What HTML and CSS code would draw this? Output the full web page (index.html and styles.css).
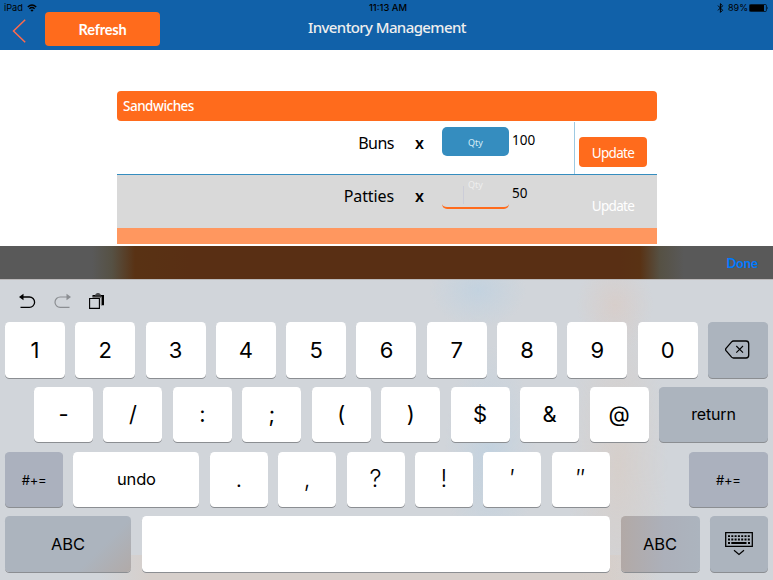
FILE: index.html
```html
<!DOCTYPE html>
<html lang="en">
<head>
<meta charset="utf-8">
<title>Inventory Management</title>
<link rel="stylesheet" href="styles.css">
</head>
<body>
<header class="header">
  <div class="status">
    <div class="status-left"><span class="device">iPad</span>
      <svg width="10" height="8" viewBox="0 0 10 8" fill="none" stroke="#000" stroke-width="1.4"><path d="M.8 3Q5-.9 9.2 3M2.4 4.8Q5 2.4 7.6 4.8"/><path d="M5 7.8L3.5 6.2Q5 5 6.5 6.2Z" fill="#000" stroke="none"/></svg>
    </div>
    <div class="clock">11:13 AM</div>
    <div class="status-right">
      <svg width="7" height="10" viewBox="0 0 7 10" fill="none" stroke="#000" stroke-width="1"><path d="M1 2.6L5.6 7.2 3.4 9.4V.7L5.6 2.8 1 7.4"/></svg>
      <span class="percent">89%</span>
      <svg width="20" height="8" viewBox="0 0 20 8"><rect x=".4" y=".5" width="17" height="7" rx="1" fill="none" stroke="#000" stroke-width=".7"/><path d="M.8 1H15V7H.8Z"/><path d="M18.3 2.5Q19.6 4 18.3 5.5Z"/></svg>
    </div>
  </div>
  <nav class="nav">
    <svg class="back" width="14" height="24" viewBox="0 0 14 24" fill="none" stroke="#ff6a4c" stroke-width="1.5"><path d="M13.2.7L1.5 12 13.2 23.3"/></svg>
    <button class="btn refresh">Refresh</button>
    <h1 class="title">Inventory Management</h1>
  </nav>
</header>
<main class="list">
  <div class="section">Sandwiches</div>
  <div class="item">
    <span class="name">Buns</span><span class="times">x</span>
    <span class="qty">Qty</span><span class="count">100</span>
    <div class="action"><button class="btn update">Update</button></div>
  </div>
  <div class="item selected">
    <span class="name">Patties</span><span class="times">x</span>
    <span class="qty editing">Qty</span><span class="count">50</span>
    <div class="action"><button class="btn update">Update</button></div>
  </div>
  <div class="next-section"></div>
</main>
<div class="accessory"><span class="done">Done</span></div>
<section class="keyboard">
  <div class="tools">
    <svg width="17" height="16" viewBox="0 0 17 16" fill="none" stroke="#000" stroke-width="1.3"><path d="M3 4H10.4A5 5 0 0 1 10.4 14.4H1.5"/><path d="M0 4L4.5 .8V7.2Z" fill="#000" stroke="none"/></svg>
    <svg width="17" height="16" viewBox="0 0 17 16" fill="none" stroke="#8b8e92" stroke-width="1.2"><path d="M14 4H6.2A5 5 0 0 0 6.2 14.4H15.5"/><path d="M17 4L12.5 .8V7.2Z" fill="#8b8e92" stroke="none"/></svg>
    <svg width="16" height="16" viewBox="0 0 16 16"><path d="M3.5 2H6Q6.5.3 9 .3T12 2H15V12.3H12V4.5H3.5Z"/><path d="M6 1.9H12" stroke="#d1d5da" stroke-width=".6"/><path d="M4 4.2H12.4V12" fill="none" stroke="#777" stroke-width="1.2"/><path d="M.6 5.5H10.4V15.4H.6Z" fill="#d1d5da" stroke="#000" stroke-width="1.1"/></svg>
  </div>
  <div class="row row-digits">
    <span class="key">1</span><span class="key">2</span><span class="key">3</span><span class="key">4</span><span class="key">5</span><span class="key">6</span><span class="key">7</span><span class="key">8</span><span class="key">9</span><span class="key">0</span>
    <span class="key dark"><svg width="25" height="19" viewBox="0 0 25 19" fill="none" stroke="#000" stroke-width="1.3"><path d="M8.5 1H21Q23.7 1 23.7 3.7V15.3Q23.7 18 21 18H8.5Q7.5 18 6.6 17.1L1 10.6Q.2 9.5 1 8.4L6.6 1.9Q7.5 1 8.5 1Z"/><path d="M11.3 6L18 12.7M18 6L11.3 12.7" stroke-width="1.1"/></svg></span>
  </div>
  <div class="row row-symbols">
    <span class="key">-</span><span class="key">/</span><span class="key">:</span><span class="key">;</span><span class="key">(</span><span class="key">)</span><span class="key">$</span><span class="key">&amp;</span><span class="key">@</span>
    <span class="key dark word return">return</span>
  </div>
  <div class="row row-marks">
    <span class="key dark small cool">#+=</span><span class="key word undo">undo</span>
    <span class="key">.</span><span class="key">,</span><span class="key">?</span><span class="key">!</span><span class="key">′</span><span class="key">″</span>
    <span class="key dark small cool more">#+=</span>
  </div>
  <div class="row row-bottom">
    <span class="key dark word abc">ABC</span><span class="key space"></span><span class="key dark word abc-right">ABC</span>
    <span class="key dark hide"><svg width="28" height="24" viewBox="0 0 28 24" fill="none" stroke="#000"><path d="M.7.7H27.3V14.3H.7Z" stroke-width="1.3"/><path d="M3 4.2H25M3 7.5H25" stroke-width="1.8" stroke-dasharray="2 1.3"/><path d="M3 11H5M6.3 11H21.5M23 11H25" stroke-width="1.8"/><path d="M9 18.2L14 22.4 19 18.2" stroke-width="1.2"/></svg></span>
  </div>
</section>
</body>
</html>
```
FILE: styles.css
```css
* { box-sizing: border-box; }
body {
  margin: 0;
  width: 773px;
  height: 580px;
  overflow: hidden;
  background: #fff;
  color: #000;
  font-family: "Noto Sans", sans-serif;
  display: flex;
  flex-direction: column;
}
svg { display: block; flex: none; }

.header { height: 50px; background: #1161a9; flex: none; }
.status {
  height: 12px;
  display: grid;
  grid-template-columns: 1fr auto 1fr;
  padding: 0 4px 0 4px;
  font: 9.5px/16px Inter, sans-serif;
}
.status-left, .status-right { display: flex; align-items: center; height: 16px; }
.status-left { gap: 4px; }
.device { font-size: 9.2px; }
.clock { font-weight: 500; font-size: 9.4px; padding-left: 3px; }
.status-right { justify-content: flex-end; gap: 1px; }
.percent { margin-left: 3px; font-size: 9px; }
.nav { height: 38px; display: grid; grid-template-columns: 33px 115px 1fr; align-items: start; padding-left: 12px; }
.back { margin-top: 7px; }
.btn {
  border: 0;
  padding: 0;
  border-radius: 4px;
  background: #ff6b1c;
  color: #fff;
  font-family: "Noto Sans", sans-serif;
}
.refresh { height: 34px; font: 700 14.5px/36px Lato, sans-serif; letter-spacing: -.2px; }
.title { margin: 0 0 0 148px; color: #eee; font-size: 15px; letter-spacing: -.6px; line-height: 30px; font-weight: 550; white-space: nowrap; }

.list { width: 540px; height: 155px; margin: 41px 0 0 117px; flex: none; }
.section {
  height: 29.5px;
  border-radius: 4px;
  background: #ff6b1c;
  color: #fff;
  padding-left: 6px;
  font-size: 13.5px;
  letter-spacing: -.5px;
  line-height: 31px;
  font-weight: 550;
}
.item {
  height: 54.5px;
  padding-top: 1.5px;
  border-bottom: 1px solid #358dbf;
  display: grid;
  grid-template-columns: 277px 48px 67px 65px 83px;
  font-size: 16px;
}
.item.selected { height: 53px; padding-top: 0; border: 0; background: #d9d9d9; }
.name { text-align: right; line-height: 42px; letter-spacing: -.1px; }
.item:not(.selected) .name { letter-spacing: -.5px; }
.times { text-align: center; line-height: 42px; font-weight: 600; padding-left: 3px; }
.qty {
  height: 29px;
  margin-top: 5px;
  border-radius: 5px;
  background: #358dbf;
  color: #d5edf8;
  font-size: 9px;
  line-height: 31px;
  text-align: center;
}
.editing {
  height: 30px;
  margin-top: 4px;
  background: linear-gradient(#cccdd8, #cccdd8) 21px 7px / 1px 18px no-repeat;
  border-bottom: 2px solid #ff6b1c;
  color: #eee;
  line-height: 11px;
}
.count { padding-left: 3px; font-size: 13.5px; line-height: 36px; }
.action { padding: 15px 0 0 5px; }
.item:not(.selected) .action { border-left: 1px solid #9dc9e2; padding-left: 4px; }
.update { width: 68px; height: 30px; font-size: 13.5px; letter-spacing: -.7px; line-height: 32px; display: block; }
.selected .update { background: none; }
.next-section { height: 16px; background: #ff975f; }

.accessory {
  height: 33px;
  flex: none;
  text-align: right;
  padding-right: 15px;
  background: linear-gradient(90deg, #595959 0, #595959 92px, #565144 112px, #593214 135px, #592f14 190px, #592f14 620px, #593214 640px, #565144 660px, #595959 684px);
}
.done { color: #007aff; font: 700 13px/34px Lato, sans-serif; }

.keyboard {
  flex: 1;
  border-top: 1px solid #bbb9ba;
  background:
    radial-gradient(ellipse 48px 38px at 478px 10px, #c3d2df, transparent),
    radial-gradient(ellipse 45px 110px at 490px 175px, #c3d2df, transparent),
    radial-gradient(ellipse 38px 48px at 615px 25px, #d7cecb, transparent),
    radial-gradient(ellipse 50px 170px at 618px 185px, #d6cfcb, transparent),
    linear-gradient(90deg, transparent 100px, #d6cfcb 150px, #d6cfcb 610px, transparent 665px) 0 275px / 100% 26px no-repeat,
    #d1d5da;
}
.tools { height: 42px; padding: 13px 0 0 19px; display: flex; gap: 17.8px; }
.row { display: flex; gap: 10.3px; height: 55.5px; padding: 0 5px; margin-bottom: 9.3px; }
.key {
  flex: none;
  width: 58px;
  height: 55.5px;
  border-radius: 4.5px;
  background: #fff;
  box-shadow: 0 1px 0 #8b8e92;
  font: 24px/56px Inter, sans-serif;
  display: flex;
  align-items: center;
  justify-content: center;
}
.dark { background: #acb4be; }
.cool { background: #abb1be; }
.word { font-size: 16.5px; letter-spacing: -.15px; line-height: 54px; }
.small { font-size: 13px; letter-spacing: -.3px; padding-top: 1px; }
.row-digits .key { flex: 1; font-size: 22px; }
.row-symbols { padding-left: 34px; gap: 10.45px; }
.row-symbols .key { width: 59px; font-size: 22px; padding-bottom: 2px; }
.row-symbols .return { width: auto; flex: 1; font-size: 16px; }
.row-marks { gap: 10.4px; }
.row-marks .undo { width: 126px; }
.row-marks .more { width: 79.5px; margin-left: auto; }
.row-marks .key:not(.word):not(.small) { font-weight: 350; }
.row-digits .key, .row-symbols .key:not(.word) { font-weight: 370; }
.row-bottom { gap: 10.5px; }
.row-bottom .abc { width: 126px; background: linear-gradient(315deg, #b1aaa8, #acb4be 30%); }
.row-bottom .space { flex: 1; }
.row-bottom .abc-right { width: 79px; background: linear-gradient(90deg, #b2a9a6, #acb0ba 55%, #acb4be); }
```
